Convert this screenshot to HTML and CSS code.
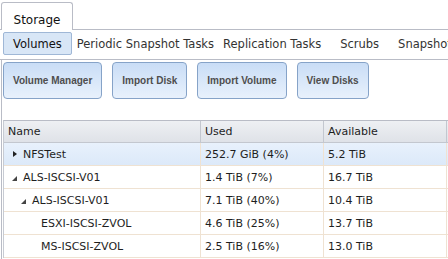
FILE: index.html
```html
<!DOCTYPE html>
<html>
<head>
<meta charset="utf-8">
<link rel="stylesheet" href="styles.css">
</head>
<body>
<div class="tabbar">
  <div class="tab">Storage</div>
</div>
<div class="subtabs">
  <div class="subtab active">Volumes</div>
  <div class="subtab">Periodic Snapshot Tasks</div>
  <div class="subtab">Replication Tasks</div>
  <div class="subtab wide">Scrubs</div>
  <div class="subtab wide">Snapshots</div>
</div>
<div class="panel">
  <div class="toolbar">
    <button class="btn">Volume Manager</button>
    <button class="btn">Import Disk</button>
    <button class="btn">Import Volume</button>
    <button class="btn">View Disks</button>
  </div>
  <div class="grid">
    <div class="row head">
      <div class="cell c1">Name</div>
      <div class="cell c2">Used</div>
      <div class="cell c3">Available</div>
    </div>
    <div class="row sel">
      <div class="cell c1"><span class="ind l0"><span class="tri closed"></span></span>NFSTest</div>
      <div class="cell c2">252.7 GiB (4%)</div>
      <div class="cell c3">5.2 TiB</div>
    </div>
    <div class="row">
      <div class="cell c1"><span class="ind l0"><span class="tri open"></span></span>ALS-ISCSI-V01</div>
      <div class="cell c2">1.4 TiB (7%)</div>
      <div class="cell c3">16.7 TiB</div>
    </div>
    <div class="row">
      <div class="cell c1"><span class="ind l1"><span class="tri open"></span></span>ALS-ISCSI-V01</div>
      <div class="cell c2">7.1 TiB (40%)</div>
      <div class="cell c3">10.4 TiB</div>
    </div>
    <div class="row">
      <div class="cell c1"><span class="ind l2"></span>ESXI-ISCSI-ZVOL</div>
      <div class="cell c2">4.6 TiB (25%)</div>
      <div class="cell c3">13.7 TiB</div>
    </div>
    <div class="row">
      <div class="cell c1"><span class="ind l2"></span>MS-ISCSI-ZVOL</div>
      <div class="cell c2">2.5 TiB (16%)</div>
      <div class="cell c3">13.0 TiB</div>
    </div>
  </div>
</div>
</body>
</html>
```
FILE: styles.css
```css
html, body { margin: 0; padding: 0; background: #fff; }
body {
  font-family: "DejaVu Sans", Verdana, sans-serif;
  font-size: 11px;
  color: #1e1e1e;
  width: 448px;
  height: 259px;
  overflow: hidden;
}
.tabbar {
  height: 29px;
  border-bottom: 1px solid #b9bcc6;
  display: flex;
  align-items: flex-end;
  padding-left: 1px;
}
.tab {
  width: 72px;
  height: 28px;
  box-sizing: border-box;
  border: 1px solid #b9bcc6;
  border-bottom: none;
  border-radius: 3px 3px 0 0;
  background: #fff;
  margin-bottom: -1px;
  display: flex;
  align-items: center;
  justify-content: center;
  font-size: 12px;
  color: #111;
  padding-top: 6px;
}
.subtabs {
  height: 30px;
  box-sizing: border-box;
  border-bottom: 1px solid #b9bcc6;
  display: flex;
  align-items: flex-start;
  padding: 2px 0 0 3px;
  white-space: nowrap;
  overflow: hidden;
}
.subtab {
  height: 23px;
  box-sizing: border-box;
  padding-top: 1px;
  margin-left: 9px;
  display: flex;
  align-items: center;
  color: #333;
  font-size: 11.5px;
}
.subtab.wide { margin-left: 19px; }
.subtab.active {
  background: #d8e6f6;
  border: 1px solid #9fb7d6;
  border-radius: 2px;
  padding: 1px 9px 0 9px;
  margin-left: 0;
  margin-right: -4px;
  color: #111;
}
.panel {
  border-left: 1px solid #b9bcc6;
  margin-left: 1px;
  padding-left: 1px;
  height: 200px;
}
.toolbar {
  display: flex;
  gap: 10px;
  padding: 2px 0 0 0;
  height: 60px;
  box-sizing: border-box;
  align-items: flex-start;
}
.btn {
  height: 37px;
  padding: 0 9px;
  border: 1px solid #86a3c8;
  border-radius: 4px;
  background: linear-gradient(#c9ddf6, #e8f1fc);
  font-family: "Liberation Sans", Arial, sans-serif;
  font-size: 10px;
  font-weight: bold;
  color: #4e4e4e;
}
.grid {
  border-top: 1px solid #b9bcc6;
  border-left: 1px solid #c7cbd3;
}
.row {
  display: flex;
  height: 22px;
  border-bottom: 1px solid #efe2d2;
}
.row.head {
  background: linear-gradient(#eef0f3, #dfe2e8);
  border-bottom: 1px solid #c3c7cf;
  height: 21px;
}
.row.sel {
  background: linear-gradient(#e8f1fc, #dce9f9);
}
.cell {
  display: flex;
  align-items: center;
  padding-left: 4px;
  box-sizing: border-box;
  border-right: 1px solid #efe2d2;
  white-space: nowrap;
}
.head .cell { border-right-color: #c3c7cf; }
.c1 { width: 197px; }
.c2 { width: 123px; }
.c3 { width: 123px; }
.ind { display: inline-flex; align-items: center; justify-content: flex-end; height: 10px; box-sizing: border-box; }
.ind.l0 { width: 15px; padding-right: 6px; }
.ind.l1 { width: 24px; padding-right: 6px; }
.ind.l2 { width: 33px; }
.tri { display: inline-block; width: 0; height: 0; }
.tri.closed {
  border-top: 3.5px solid transparent;
  border-bottom: 3.5px solid transparent;
  border-left: 4px solid #222;
}
.tri.open {
  border-left: 5px solid transparent;
  border-bottom: 5px solid #444;
  margin-top: 2px;
}
```
